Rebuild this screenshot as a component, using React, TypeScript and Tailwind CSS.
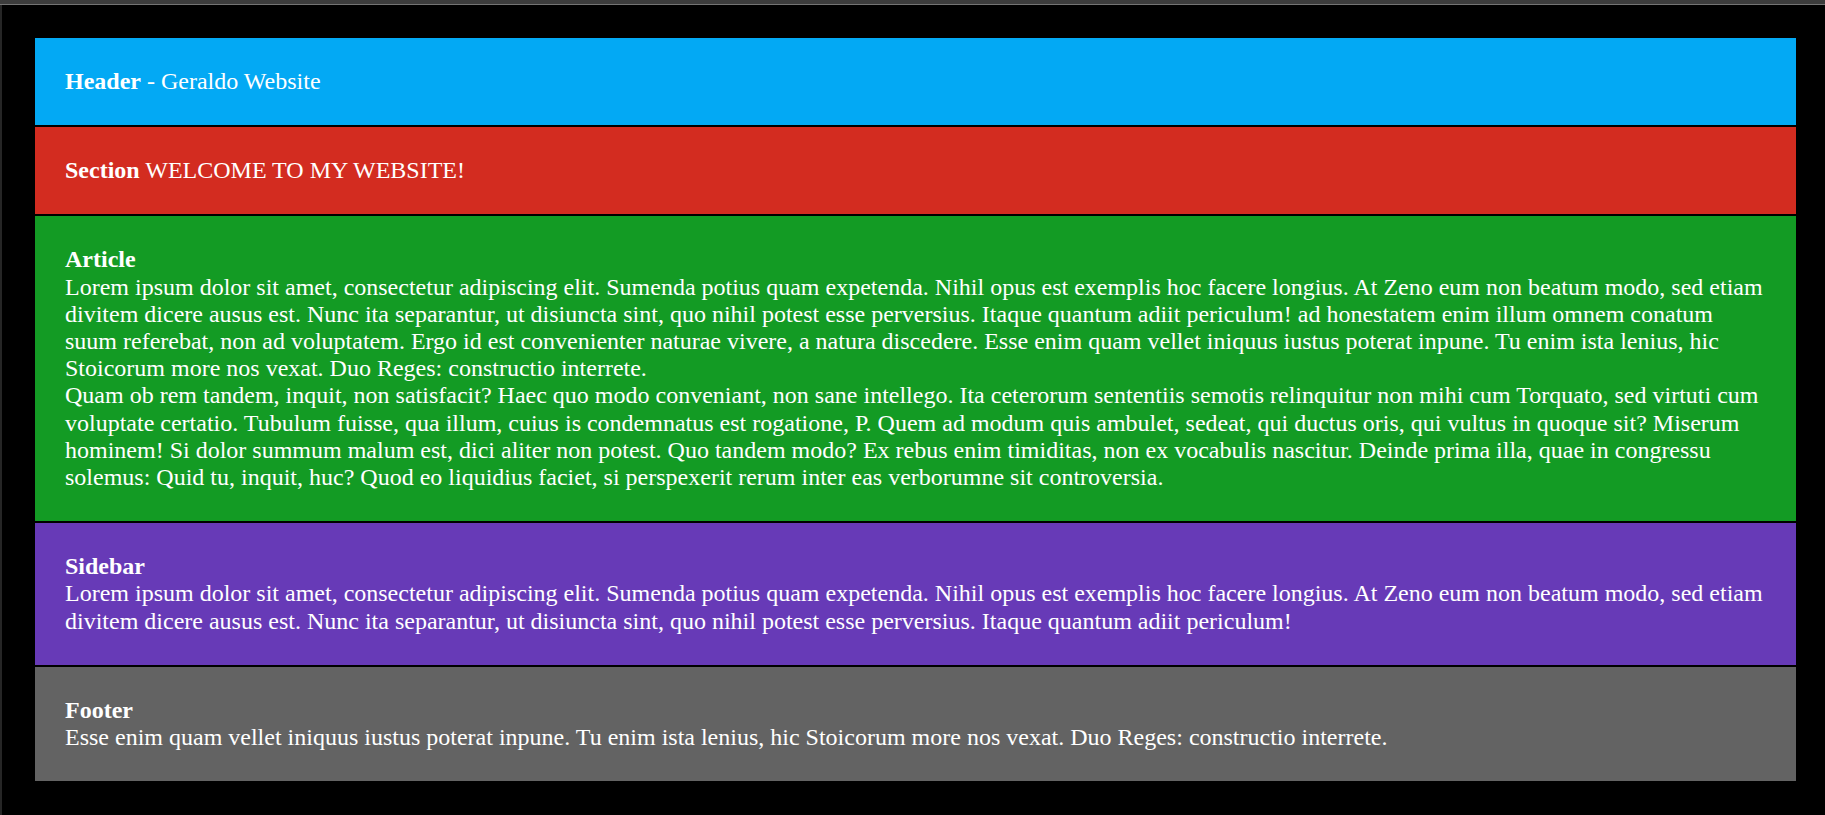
export default function App() {
  const blocks = [
    {
      key: "header",
      bg: "bg-[#03a9f4]",
      content: (
        <>
          <b>Header</b> - Geraldo Website
        </>
      ),
    },
    {
      key: "section",
      bg: "bg-[#d32c20]",
      content: (
        <>
          <b>Section</b> WELCOME TO MY WEBSITE!
        </>
      ),
    },
    {
      key: "article",
      bg: "bg-[#139b24]",
      content: (
        <>
          <b>Article</b>
          <br />
          Lorem ipsum dolor sit amet, consectetur adipiscing elit. Sumenda potius quam expetenda. Nihil opus est exemplis hoc facere longius. At Zeno eum non beatum modo, sed etiam divitem dicere ausus est. Nunc ita separantur, ut disiuncta sint, quo nihil potest esse perversius. Itaque quantum adiit periculum! ad honestatem enim illum omnem conatum suum referebat, non ad voluptatem. Ergo id est convenienter naturae vivere, a natura discedere. Esse enim quam vellet iniquus iustus poterat inpune. Tu enim ista lenius, hic Stoicorum more nos vexat. Duo Reges: constructio interrete.
          <br />
          Quam ob rem tandem, inquit, non satisfacit? Haec quo modo conveniant, non sane intellego. Ita ceterorum sententiis semotis relinquitur non mihi cum Torquato, sed virtuti cum voluptate certatio. Tubulum fuisse, qua illum, cuius is condemnatus est rogatione, P. Quem ad modum quis ambulet, sedeat, qui ductus oris, qui vultus in quoque sit? Miserum hominem! Si dolor summum malum est, dici aliter non potest. Quo tandem modo? Ex rebus enim timiditas, non ex vocabulis nascitur. Deinde prima illa, quae in congressu solemus: Quid tu, inquit, huc? Quod eo liquidius faciet, si perspexerit rerum inter eas verborumne sit controversia.
        </>
      ),
    },
    {
      key: "sidebar",
      bg: "bg-[#673ab7]",
      content: (
        <>
          <b>Sidebar</b>
          <br />
          Lorem ipsum dolor sit amet, consectetur adipiscing elit. Sumenda potius quam expetenda. Nihil opus est exemplis hoc facere longius. At Zeno eum non beatum modo, sed etiam divitem dicere ausus est. Nunc ita separantur, ut disiuncta sint, quo nihil potest esse perversius. Itaque quantum adiit periculum!
        </>
      ),
    },
    {
      key: "footer",
      bg: "bg-[#636363]",
      content: (
        <>
          <b>Footer</b>
          <br />
          Esse enim quam vellet iniquus iustus poterat inpune. Tu enim ista lenius, hic Stoicorum more nos vexat. Duo Reges: constructio interrete.
        </>
      ),
    },
  ];

  return (
    <div className="flex h-[815px] w-[1825px] flex-col overflow-hidden bg-black">
      {/* window chrome */}
      <div className="h-[4px] shrink-0 bg-[#3c3c3c]" />
      <div className="h-[1px] shrink-0 bg-[#747474]" />
      <div className="flex flex-1">
        <div className="w-[2px] shrink-0 bg-[#262626]" />
        <div className="flex-1 pl-[33px] pr-[29px] pt-[33px]">
          <div className="flex flex-col gap-[2px] font-['Liberation_Serif','Times_New_Roman',serif] text-[24px] leading-[27.2px] text-white">
            {blocks.map((b) => (
              <div key={b.key} className={`${b.bg} px-[30px] py-[30px]`}>
                {b.content}
              </div>
            ))}
          </div>
        </div>
      </div>
    </div>
  );
}
